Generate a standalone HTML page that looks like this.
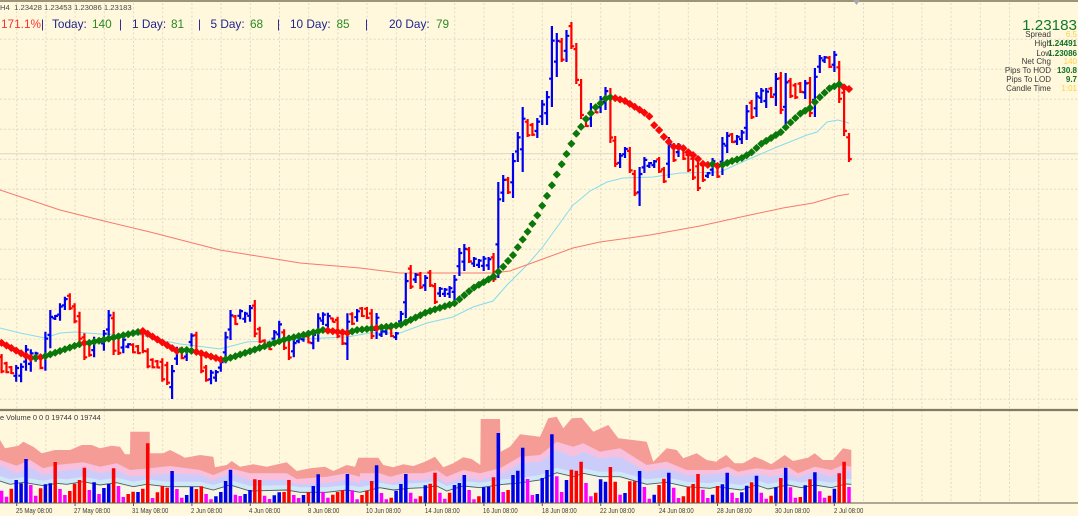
<!DOCTYPE html>
<html><head><meta charset="utf-8"><style>
html,body{margin:0;padding:0;background:#fff8dc}
#w{position:relative;width:1078px;height:516px;overflow:hidden;background:#fff8dc;font-family:"Liberation Sans",sans-serif}
svg{position:absolute;left:0;top:0}
.t{position:absolute;white-space:nowrap;line-height:1}
.n{color:#1f2490}.g{color:#2a8a22}
.h{top:18.5px;font-size:11.8px}
.a{top:506.5px;font-size:7.5px;color:#3a3a3a;transform:scaleX(.8);transform-origin:0 0}
.l{right:27px;font-size:8px;color:#3a3a3a}
.v{right:1px;font-size:8px;color:#0f6f1f;font-weight:bold}
.y{color:#ffd23c;font-weight:normal}
</style></head><body><div id="w">
<svg id="s" width="1078" height="516" xmlns="http://www.w3.org/2000/svg"></svg>
<div class="t" style="left:0;top:4px;font-size:7.7px;color:#4a4a4a">H4 &nbsp;1.23428 1.23453 1.23086 1.23183</div>
<div class="t h" style="left:1px;color:#ff3030">171.1%</div><div class="t h n" style="left:41px">|</div>
<div class="t h n" style="left:52px">Today:</div><div class="t h g" style="left:92px">140</div><div class="t h n" style="left:119px">|</div>
<div class="t h n" style="left:132px">1 Day:</div><div class="t h g" style="left:171px">81</div><div class="t h n" style="left:198px">|</div>
<div class="t h n" style="left:210.5px">5 Day:</div><div class="t h g" style="left:250px">68</div><div class="t h n" style="left:277px">|</div>
<div class="t h n" style="left:290px">10 Day:</div><div class="t h g" style="left:336.5px">85</div><div class="t h n" style="left:365px">|</div>
<div class="t h n" style="left:389px">20 Day:</div><div class="t h g" style="left:436px">79</div>
<div class="t" style="right:1px;top:18px;font-size:15.2px;color:#0f7a2a">1.23183</div>
<div class="t l" style="top:30.5px">Spread</div><div class="t v y" style="top:30.5px">6.5</div>
<div class="t l" style="top:40px">High</div><div class="t v" style="top:40px">1.24491</div>
<div class="t l" style="top:50px">Low</div><div class="t v" style="top:50px">1.23086</div>
<div class="t l" style="top:58px">Net Chg</div><div class="t v y" style="top:58px">140</div>
<div class="t l" style="top:67px">Pips To HOD</div><div class="t v" style="top:67px">130.8</div>
<div class="t l" style="top:76px">Pips To LOD</div><div class="t v" style="top:76px">9.7</div>
<div class="t l" style="top:85px">Candle Time</div><div class="t v y" style="top:85px">1:01</div>
<div class="t" style="left:0;top:414px;font-size:7.4px;color:#3a3a3a">e Volume 0 0 0 19744 0 19744</div>
<div class="t a" style="left:15.5px">25 May 08:00</div><div class="t a" style="left:73.5px">27 May 08:00</div><div class="t a" style="left:132px">31 May 08:00</div>
<div class="t a" style="left:190.5px">2 Jun 08:00</div><div class="t a" style="left:249px">4 Jun 08:00</div><div class="t a" style="left:307.5px">8 Jun 08:00</div>
<div class="t a" style="left:366px">10 Jun 08:00</div><div class="t a" style="left:424.5px">14 Jun 08:00</div><div class="t a" style="left:483px">16 Jun 08:00</div>
<div class="t a" style="left:541.5px">18 Jun 08:00</div><div class="t a" style="left:600px">22 Jun 08:00</div><div class="t a" style="left:658.5px">24 Jun 08:00</div>
<div class="t a" style="left:716.5px">28 Jun 08:00</div><div class="t a" style="left:775px">30 Jun 08:00</div><div class="t a" style="left:833.5px">2 Jul 08:00</div>
</div>
<script>
var X=function(i){return 1.6+4.87*i},o='';
function P(d,c,w,e){o+='<path d="'+d+'" fill="none" stroke="'+c+'" stroke-width="'+w+'" '+(e||'')+'/>'}
function poly(a){return a.map(function(p,i){return (i?'L':'M')+p[0].toFixed(1)+' '+p[1].toFixed(1)}).join('')}
function sp(s){return s.trim().split(/\s+/).map(function(q){return q.split(',').map(Number)})}
/* grid */
var g='';for(var k=0;k<36;k++){var x=16.7+29.2*k;g+='M'+x.toFixed(1)+' 3V502'}
for(var y=39.3;y<405;y+=30)g+='M0 '+y.toFixed(1)+'H1078';
P(g,'#dedacb',1,'stroke-dasharray="2 2.2"');
P('M0 153.7H1078','#dedacb',1.2);
/* volume areas */
function vz(a,b){return sp(b).map(function(p){return [a+p[0]/3,405+p[1]/3]})}
function v3(x,y,z){return vz(0,x).concat(vz(360,y),vz(718,z))}
var sal=v3('0,105 15,130 40,125 55,122 70,110 100,125 125,145 165,135 210,135 245,120 275,120 300,130 335,122 360,125 375,148 390,148 391,80 449,80 450,145 490,145 510,135 540,150 555,158 600,150 640,155 645,187 680,180 695,168 720,185 760,178 800,185 860,172 890,198 930,190 975,185 1000,198 1040,180 1065,185 1075,158',
'0,158 55,158 70,180 100,187 130,178 160,183 195,170 225,155 250,187 280,175 310,157 335,162 361,180 362,42 420,42 422,140 450,125 480,88 540,95 565,40 590,35 610,70 635,40 665,38 700,80 745,60 775,100 860,110 880,170 920,130 950,135 970,160 1010,145 1040,165 1070,170',
'0,165 25,150 50,175 75,175 110,155 135,165 160,178 200,150 225,168 270,158 290,145 315,165 345,165 375,130 400,135');
var pnk=v3('0,165 50,182 90,165 130,190 170,180 250,172 300,185 350,175 390,195 450,190 510,183 600,195 640,210 690,190 750,205 860,205 890,222 980,215 1040,205 1080,215',
'0,205 60,205 90,215 130,205 190,205 230,195 260,215 310,195 360,205 420,190 480,155 540,150 590,110 640,125 670,115 720,140 780,130 860,180 920,170 980,195 1040,195',
'0,195 30,185 60,200 115,190 160,195 210,185 240,205 290,185 340,195 375,180 400,185');
var lav=v3('0,180 50,205 90,185 130,210 170,200 250,190 300,205 350,195 390,215 450,210 510,205 600,210 640,225 690,205 750,225 860,225 890,238 980,235 1040,225 1080,235',
'0,225 60,225 90,235 130,225 190,225 230,215 260,235 310,215 360,225 420,210 480,175 540,170 590,135 640,155 670,140 720,160 780,155 860,200 920,190 980,210 1040,210',
'0,205 30,205 60,215 115,205 160,215 210,205 240,218 290,200 340,215 375,195 400,200');
var dk=v3('0,228 30,238 70,232 130,242 170,235 200,238 250,230 300,240 350,233 400,245 440,238 500,245 600,245 640,255 690,240 750,258 860,255 900,262 980,262 1040,255 1080,262',
'0,262 60,248 100,255 150,250 190,248 230,243 260,258 310,243 360,248 430,238 470,235 540,225 590,203 640,215 670,205 720,215 780,215 860,238 920,232 980,245 1050,250',
'0,245 30,250 70,255 115,240 150,252 210,240 250,248 290,240 340,248 385,237 400,238');
function fill(a,c){o+='<path d="'+poly(a)+'L'+a[a.length-1][0].toFixed(1)+' 503L0 503Z" fill="'+c+'"/>'}
fill(sal,'#f69c96');fill(pnk,'#f8c0dc');fill(lav,'#ccccfa');
fill(dk.map(function(p){return [p[0],p[1]-5]}),'#cfe8f6');fill(dk,'#f7f5e4');
P(poly(dk),'#4a5a5a',.9);
/* volume bars */
var V=('m257 m275 r251 b225 b235 b162 m240 m272 r250 b238 b235 r171 m252 m270 r258 r236 r225 r188 m255 b232 m267 b249 b237 r190 m243 m276 r267 r260 b261 r251 r115 m279 r262 r244 r248 b198 m252 m278 b270 b245 r252 r244 m267 m283 b274 b261 b228 b194 m269 m273 b267 b255 r223 r225 m272 m282 b271 b262 r261 r225 m270 m279 b270 r262 b243 b208 m261 m278 r269 r261 r256 b207 m256 m283 '+
'r270 r257 r228 b181 m264 m283 r278 b257 b237 b207 m263 m281 r274 b241 r236 r203 m263 m281 r263 b240 b234 b210 m255 m283 r274 b247 b245 r217 b84 m261 r255 b210 b197 b128 m222 m270 b267 b219 b195 b88 m214 m261 b225 r194 r197 r170 m234 m274 r263 b223 b230 r186 r230 m269 b264 r229 r229 b198 m246 m281 b269 r240 r221 b203 m248 m279 r274 r245 r237 r207 m254 m279 b269 r243 '+
'b238 b203 m263 m279 b262 b242 r232 b212 m263 m281 r272 b247 r219 b188 m247 m278 r276 b241 r223 b202 m259 m278 r272 b251 r205 r170 m246').split(' ');
var C={r:'#ff0000',b:'#0000e8',m:'#ff00ff'},seg={r:'',b:'',m:''};
V.forEach(function(s,i){seg[s[0]]+='M'+X(i).toFixed(1)+' '+(405+s.slice(1)/3).toFixed(1)+'V503'});
for(var c in seg)P(seg[c],C[c],3.5);
/* price MAs */
P(poly(sp('0,328 20,333 45,338 60,333 75,332 100,334 140,335 160,340 180,344 197,346 220,349 247,342 267,341 293,340 323,338 347,337 370,333 400,333 427,323 453,317 473,307 493,301 507,285 527,265 542,248 560,223 573,205 577,202 590,191 607,182 623,178 653,177 680,173 720,172 740,163 777,147 807,135 817,132 827,122 838,120 849,123')),'#86dcee',1);
P(poly(sp('0,190 60,210 100,220 150,232 220,250 300,263 360,268 400,273 493,273 510,271 540,260 573,248 600,242 650,235 700,226 750,215 783,208 813,203 837,196 849,194')),'#f77a6e',1);
/* OHLC */
var A=sp('222,280 245,280 258,282 255,305 250,307 195,272 208,275 215,245 225,268 155,272 90,205 105,120 70,122 50,90 40,90 70,130 95,185 160,240 180,230 170,232 175,190 150,212 90,180 95,225 165,225 170,220 190,205 190,220 195,222 150,220 205,265 235,265 240,265 235,305 245,315 255,357 200,255 200,238 205,243 160,200 155,225 210,280 255,305 270,313 270,305 240,275 155,250 90,180 105,135 88,118 95,128 75,125 60,172 140,190 178,205 185,210 150,190 122,185 148,210 165,240 180,232 172,190 165,185 165,190 155,208 100,185 97,135 98,155 113,127 110,175 148,195 100,240 97,135 87,125').map(function(p){return [280+p[0]/3,280+p[1]/3]});
var B=sp('307,317 307,319 309,339 313,339 330,337 325,335 327,337 332,340 311,327 273,318 265,289 273,283 272,289 275,291 270,287 283,304 287,297 288,297 286,298 275,301 248,276 244,271 247,263 257,267 259,268 256,271 257,270 253,282 182,278 175,202 177,194 153,198 132,162 107,172 119,137 123,136 118,138 100,125 91,125 26,107 33,77 38,62 30,62 22,49 43,84 79,119 117,127 103,127 107,113 96,113 87,110 88,143 136,167 153,168 147,158 147,173 170,196 167,206 157,173 162,168 160,168 157,173 167,183 137,178 143,162 143,157 147,160 152,172 155,180 162,191 162,182 172,178 158,176 163,178 137,175 132,153 133,143 135,145 130,144 105,140 100,119 92,117 88,103 88,108 87,98 73,106 72,114 73,125 78,98 83,99 82,93 80,99 77,117 68,117 55,73 56,63 56,68 51,72 61,103 85,136 133,162');
var Q=[];
var rA=[0,1,2,8,14,15,16,17,18,23,24,27,28,29,30,31,32,33,34,37,40,41,42,48,52,53,54,55,58,59,63,68,69,70,72];
A.forEach(function(p,i){Q.push([rA.indexOf(i)>=0?'r':'b',p[0],p[1]])});
var rB=[74,75,76,80,84,86,88,89,96,101,104,108,109,115,117,118,119,120,122,125,126,129,130,135,136,138,140,141,142,143,144,147,150,154,158,160,162,163,164,166,170,172,173,174];
B.forEach(function(p,k){var i=k+74;Q.push([rB.indexOf(i)>=0?'r':'b',p[0],p[1]])});
var sg={r:'',b:''};
Q.forEach(function(q,i){var x=X(i),h=q[1],l=q[2],r=l-h,a,b;
 if(q[0]=='b'){a=h+r*.65;b=h+r*.18}else{a=h+r*.15;b=h+r*.9}
 sg[q[0]]+='M'+x.toFixed(1)+' '+h.toFixed(1)+'V'+l.toFixed(1)+'M'+(x-2.8).toFixed(1)+' '+a.toFixed(1)+'H'+x.toFixed(1)+'M'+x.toFixed(1)+' '+b.toFixed(1)+'H'+(x+2.8).toFixed(1)});
P(sg.b,'#0000f0',2.2);P(sg.r,'#ff0000',2.2);
/* trend diamonds */
var M=sp('0,342 30,358 43,357 80,344 84,343 89,343 138,332 143,331 177,351 187,350 197,352 222,360 227,359 283,340 323,330 347,333 357,330 377,328 400,325 427,312 455,303 473,288 493,277 503,267 513,255 523,239 533,223 537,216 547,196 557,174 567,153 576,134 581,127 586,119 596,107 601,103 607,97 615,98 625,101 635,107 645,113 650,117 654,125 659,130 664,137 669,142 674,147 679,147 683,148 688,152 693,155 698,159 703,164 708,165 713,164 717,166 722,165 732,161 742,158 752,152 761,144 771,138 781,132 791,122 801,113 810,108 815,102 820,97 830,88 835,86 840,84 843,87 849,89');
function my(x){for(var i=1;i<M.length;i++)if(x<=M[i][0]){var a=M[i-1],b=M[i];return a[1]+(b[1]-a[1])*(x-a[0])/(b[0]-a[0])}return M[M.length-1][1]}
var R=[[0,32],[40,42],[82,86],[141,180],[192,224],[285,288],[325,350],[373,377],[612,712],[716,719],[842,850]];
for(var i=0;i<175;i++){var x=X(i),yy=my(x),red=R.some(function(r){return x>=r[0]&&x<=r[1]}),d=3.4,col=red?'#f80808':'#0a780a';
 o+='<path d="M'+x.toFixed(1)+' '+(yy-d).toFixed(1)+'l'+d+' '+d+'l-'+d+' '+d+'l-'+d+' -'+d+'Z" fill="'+col+'" stroke="'+col+'" stroke-width="1" stroke-linejoin="round"/>'}
/* frame */
P('M0 1H1078','#7d7258',1.4);
o+='<path d="M853 0h7l-3.5 5Z" fill="#a8a8a8"/>';
P('M0 410H1078','#7f7b64',2.2);
P('M0 503H1078','#5a5a50',1);
var tk='';for(var k=0;k<15;k++){var x=16.7+58.4*k;tk+='M'+x.toFixed(1)+' 503V506'}
P(tk,'#555',1);
document.getElementById('s').innerHTML=o;
</script>
</body></html>
